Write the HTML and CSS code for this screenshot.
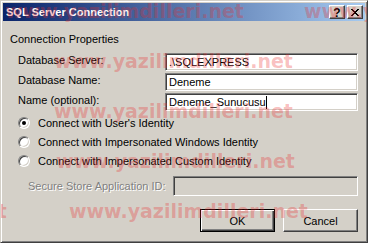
FILE: index.html
```html
<!DOCTYPE html>
<html lang="en">
<head>
    <meta charset="UTF-8">
    <meta name="viewport" content="width=device-width, initial-scale=1.0">
    <link rel="stylesheet" href="styles.css">
    <title>SQL Server Connection</title>
</head>
<body>
    <div class="window">
        <div class="titlebar">
            <span class="title">SQL Server Connection</span>
            <div class="caption-buttons">
                <span class="caption-btn help">?</span>
                <span class="caption-btn close">
                    <svg width="8" height="7" viewBox="0 0 8 7">
                        <path d="M0 0h2v1h-2zM6 0h2v1h-2zM1 1h2v1h-2zM5 1h2v1h-2zM2 2h4v1h-4zM3 3h2v1h-2zM2 4h4v1h-4zM1 5h2v1h-2zM5 5h2v1h-2zM0 6h2v1h-2zM6 6h2v1h-2z" fill="#000"/>
                    </svg>
                </span>
            </div>
        </div>

        <div class="content">
            <div class="group-heading">Connection Properties</div>

            <div class="fields">
                <label for="server">Database Server:</label>
                <div class="textbox" id="server">.\SQLEXPRESS</div>
                <label for="dbname">Database Name:</label>
                <div class="textbox" id="dbname">Deneme</div>
                <label for="name">Name (optional):</label>
                <div class="textbox" id="name">Deneme_Sunucusu<span class="caret"></span></div>
            </div>

            <div class="radios">
                <div class="radio-row"><span class="radio checked"></span>Connect with User's Identity</div>
                <div class="radio-row"><span class="radio"></span>Connect with Impersonated Windows Identity</div>
                <div class="radio-row"><span class="radio"></span>Connect with Impersonated Custom Identity</div>
            </div>

            <div class="store-row">
                <span class="disabled-label">Secure Store Application ID:</span>
                <div class="textbox disabled"></div>
            </div>

            <div class="buttons">
                <button class="btn default">OK</button>
                <button class="btn">Cancel</button>
            </div>
        </div>

        <!-- watermark of the source site, drawn over the dialog -->
        <div class="watermarks">
            <span class="wm" style="left:4px;top:1px">www.yazilimdilleri.net</span>
            <span class="wm" style="left:303px;top:1px">www.yazilimdilleri.net</span>
            <span class="wm" style="left:53px;top:51px">www.yazilimdilleri.net</span>
            <span class="wm" style="left:-247px;top:101px">www.yazilimdilleri.net</span>
            <span class="wm" style="left:53px;top:101px">www.yazilimdilleri.net</span>
            <span class="wm" style="left:-245px;top:151px">www.yazilimdilleri.net</span>
            <span class="wm" style="left:55px;top:151px">www.yazilimdilleri.net</span>
            <span class="wm" style="left:-233px;top:201px">www.yazilimdilleri.net</span>
            <span class="wm" style="left:68px;top:201px">www.yazilimdilleri.net</span>
        </div>
    </div>
</body>
</html>
```

FILE: styles.css
```css
*{
    box-sizing: border-box;
}

body{
    margin: 0;
    background-color: #d4d0c8;
    font-family: "Liberation Sans", Arial, sans-serif;
    font-size: 11px;
    color: #000;
}

.window{
    position: relative;
    overflow: hidden;
    width: 368px;
    height: 243px;
    padding: 2px;
    background-color: #d4d0c8;
    border: 1px solid;
    border-color: #d4d0c8 #404040 #404040 #d4d0c8;
    box-shadow: inset 1px 1px #fff, inset -1px -1px #808080;
}

.titlebar{
    display: flex;
    align-items: center;
    justify-content: space-between;
    height: 18px;
    padding: 0 2px 0 3px;
    background: linear-gradient(to right, #0a246a, #a6caf0);
}

.title{
    color: #fff;
    font-weight: bold;
    font-size: 11px;
}

.caption-buttons{
    display: flex;
    gap: 2px;
}

.caption-btn{
    display: flex;
    align-items: center;
    justify-content: center;
    width: 16px;
    height: 14px;
    background-color: #d4d0c8;
    border: 1px solid;
    border-color: #fff #404040 #404040 #fff;
    box-shadow: inset -1px -1px #808080;
    font-weight: bold;
    font-size: 12px;
    line-height: 1;
}

.help{
    padding-top: 1px;
}

.content{
    padding: 12px 7px 0;
}

.group-heading{
    line-height: 13px;
}

.fields{
    display: grid;
    grid-template-columns: 147px 1fr;
    row-gap: 2px;
    margin-top: 7px;
    padding-left: 8px;
}

.fields label{
    line-height: 14px;
}

.textbox{
    height: 18px;
    padding: 2px 3px;
    background-color: #fff;
    border: 1px solid;
    border-color: #808080 #fff #fff #808080;
    box-shadow: inset 1px 1px #404040, inset -1px -1px #d4d0c8;
    line-height: 13px;
    white-space: nowrap;
}

.textbox.disabled{
    background-color: #d4d0c8;
    height: 20px;
    width: 185px;
}

.caret{
    display: inline-block;
    width: 1px;
    height: 13px;
    vertical-align: top;
    background-color: #000;
}

.radios{
    margin-top: 2px;
    padding-left: 8px;
}

.radio-row{
    display: flex;
    align-items: center;
    gap: 8px;
    height: 19px;
}

.radio{
    position: relative;
    width: 12px;
    height: 12px;
    border-radius: 50%;
    background-color: #fff;
    border: 1px solid;
    border-color: #808080 #fff #fff #808080;
    box-shadow: inset 1px 1px #404040, inset -1px -1px #d4d0c8;
}

.radio.checked::after{
    content: "";
    position: absolute;
    left: 3px;
    top: 3px;
    width: 4px;
    height: 4px;
    border-radius: 50%;
    background-color: #000;
}

.store-row{
    display: flex;
    align-items: center;
    justify-content: space-between;
    margin-top: 6px;
    padding-left: 18px;
}

.disabled-label{
    color: #808080;
    text-shadow: 1px 1px #fff;
}

.buttons{
    display: flex;
    justify-content: flex-end;
    gap: 8px;
    margin-top: 13px;
}

.btn{
    width: 75px;
    height: 23px;
    padding: 0;
    font-family: inherit;
    font-size: 11px;
    color: #000;
    background-color: #d4d0c8;
    border: 1px solid;
    border-color: #fff #404040 #404040 #fff;
    box-shadow: inset -1px -1px #808080;
}

.btn.default{
    border: 1px solid #000;
    box-shadow: inset 1px 1px #fff, inset -1px -1px #404040, inset -2px -2px #808080;
}

.watermarks{
    position: absolute;
    inset: 0;
    pointer-events: none;
}

.wm{
    position: absolute;
    font-family: "DejaVu Sans", sans-serif;
    font-weight: bold;
    font-size: 19px;
    line-height: 1;
    color: rgba(235, 40, 40, 0.3);
    white-space: nowrap;
}
```
